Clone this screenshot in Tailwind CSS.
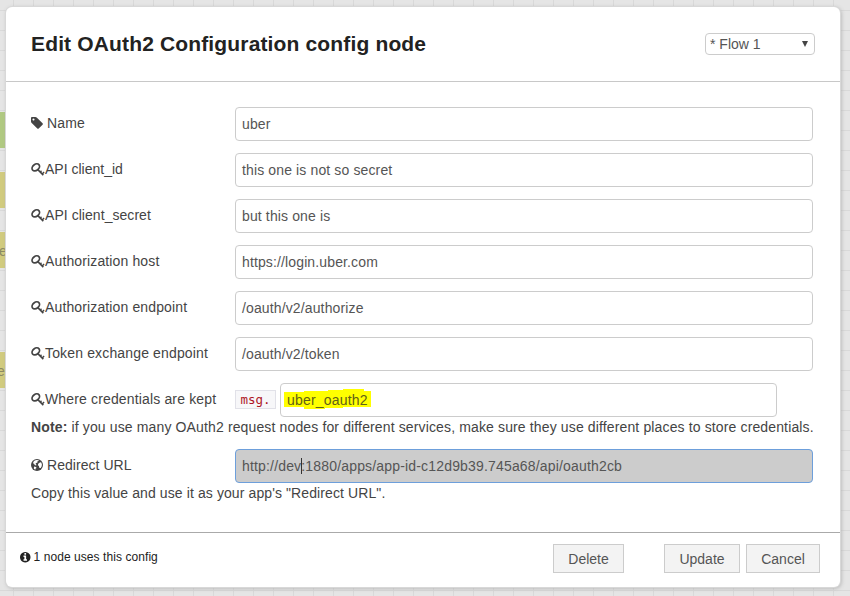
<!DOCTYPE html>
<html lang="en">
<head>
<meta charset="utf-8">
<title>Edit config node</title>
<script src="https://cdn.jsdelivr.net/npm/@tailwindcss/browser@4"></script>
</head>
<body class="w-[850px] h-[596px] overflow-hidden relative bg-[#e5e5e5] font-['Liberation_Sans',Arial,sans-serif] text-[14px] leading-5 text-[#444]">
<svg class="hidden">
  <symbol id="key" viewBox="0 0 14 14"><g fill="none" stroke="currentColor"><ellipse cx="4.8" cy="4.4" rx="4.1" ry="3" transform="rotate(-38 4.8 4.4)" stroke-width="1.7"/><path d="M6.6 6.4L12.3 12.1" stroke-width="1.6"/><path d="M9.3 9.1l1.2-1.3M11.2 11l1.9-1.9" stroke-width="1.4"/></g></symbol>
</svg>
<!-- workspace behind the dialog -->
<svg class="absolute inset-0" width="850" height="596" shape-rendering="crispEdges">
  <defs><pattern id="grid" width="20" height="20" patternUnits="userSpaceOnUse"><path d="M13 0h1v20h-1zM0 10h20v1H0z" fill="#d9d9d9"/></pattern></defs>
  <rect width="850" height="596" fill="url(#grid)"/>
  <path d="M0 112h5v36H0z" fill="#b0c981"/>
  <path d="M0 172h5v36H0zM0 232h5v36H0zM0 352h5v36H0z" fill="#d1cb7e"/>
</svg>
<span class="absolute left-[-1px] top-[241px] text-[#8b8963]">e</span>
<span class="absolute left-[-3px] top-[361px] text-[#8b8963]">e</span>

<main class="absolute left-[6px] top-[7px] w-[834px] h-[580px] rounded-[6px] bg-white shadow-[0_0_0_1px_#d8d8d8,1px_1px_4px_#aaa] flex flex-col">
  <header class="h-[75px] border-b border-[#c8c8c8] flex items-center justify-between pl-[25px] pr-[25px] shrink-0">
    <h1 class="text-[21px] font-bold text-[#222] tracking-[0.15px]">Edit OAuth2 Configuration config node</h1>
    <div class="w-[110px] h-[22px] border border-[#ccc] rounded-[4px] flex items-center justify-between pl-[4px] pr-[6px] text-[#555]"><span>* Flow 1</span><svg width="6" height="6" viewBox="0 0 6 6"><path d="M0 0h6L3 6z" fill="#444"/></svg></div>
  </header>
  <section class="flex-1 px-[25px] pt-[25px] flex flex-col tracking-[0.13px]">
    <div class="flex h-[34px] mb-3"><label class="w-[204px] pt-[6px] flex"><svg class="mt-[4px] mr-[4px]" width="12" height="12" viewBox="0 128 1536 1536"><path fill="currentColor" d="M448 448q0-53-37.5-90.5t-90.5-37.5-90.5 37.5-37.5 90.5 37.5 90.5 90.5 37.5 90.5-37.5 37.5-90.5zm1067 576q0 53-37 90l-491 492q-39 37-91 37-53 0-90-37l-715-716q-38-37-64.5-101t-26.5-117v-416q0-52 38-90t90-38h416q53 0 117 26.5t102 64.5l715 714q37 39 37 91z"/></svg><span>Name</span></label><div class="w-[578px] border border-[#ccc] rounded-[4px] px-[6px] pt-[6px] text-[#555]">uber</div></div>
    <div class="flex h-[34px] mb-3"><label class="w-[204px] pt-[6px] flex"><svg class="mt-[4px]" width="14" height="14"><use href="#key"/></svg><span class="tracking-normal">API client_id</span></label><div class="w-[578px] border border-[#ccc] rounded-[4px] px-[6px] pt-[6px] text-[#555]">this one is not so secret</div></div>
    <div class="flex h-[34px] mb-3"><label class="w-[204px] pt-[6px] flex"><svg class="mt-[4px]" width="14" height="14"><use href="#key"/></svg><span class="tracking-[0.05px]">API client_secret</span></label><div class="w-[578px] border border-[#ccc] rounded-[4px] px-[6px] pt-[6px] text-[#555]">but this one is</div></div>
    <div class="flex h-[34px] mb-3"><label class="w-[204px] pt-[6px] flex"><svg class="mt-[4px]" width="14" height="14"><use href="#key"/></svg><span>Authorization host</span></label><div class="w-[578px] border border-[#ccc] rounded-[4px] px-[6px] pt-[6px] text-[#555]">https://login.uber.com</div></div>
    <div class="flex h-[34px] mb-3"><label class="w-[204px] pt-[6px] flex"><svg class="mt-[4px]" width="14" height="14"><use href="#key"/></svg><span>Authorization endpoint</span></label><div class="w-[578px] border border-[#ccc] rounded-[4px] px-[6px] pt-[6px] text-[#555]">/oauth/v2/authorize</div></div>
    <div class="flex h-[34px] mb-3"><label class="w-[204px] pt-[6px] flex"><svg class="mt-[4px]" width="14" height="14"><use href="#key"/></svg><span class="tracking-[0.15px]">Token exchange endpoint</span></label><div class="w-[578px] border border-[#ccc] rounded-[4px] px-[6px] pt-[6px] text-[#555]">/oauth/v2/token</div></div>
    <div class="flex h-[34px]"><label class="w-[204px] pt-[6px] flex"><svg class="mt-[4px]" width="14" height="14"><use href="#key"/></svg><span class="tracking-[0.15px]">Where credentials are kept</span></label>
      <code class="mt-[7px] w-[41px] h-[19px] border border-[#e1e1e8] bg-[#f7f7f9] text-[#ad1625] text-[12.5px] leading-[17px] text-center font-['DejaVu_Sans_Mono',monospace] tracking-normal">msg.</code>
      <div class="relative ml-[4px] w-[497px] border border-[#ccc] rounded-[4px] px-[6px] pt-[6px] text-[#5f6018] tracking-[0.2px]"><svg class="absolute left-[3px] top-[5px]" width="88" height="21"><path d="M0 3h20V2h24V1h15V0h21v2h7v16H59v1H41v1H20v-2H0z" fill="#ff0"/></svg><span class="relative">uber_oauth2</span></div></div>
    <p class="whitespace-nowrap h-5 tracking-[0.135px]"><b>Note:</b> if you use many OAuth2 request nodes for different services, make sure they use different places to store credentials.</p>
    <div class="flex h-[34px] mt-3"><label class="w-[204px] pt-[6px] flex"><svg class="mt-[4px] mr-[4px]" width="12" height="12" viewBox="0 0 12 12"><circle cx="6" cy="6" r="6" fill="currentColor"/><path fill="#fff" d="M5.6 1L8 1.2 7 2.2l-.8.3.4.9-1.5.6-.6 1 .9.6-.3.8-1.4-.5-.6-1.1-.9-.2.1-1.6 1.4-1.5zM8.8 3.6l1.3-.3.8 2-.2 2-1 1.7-1.3-.1-.5-1.9-1-.7.3-1.6zM3 7.4l2 .6.5 1.1-1 .7-.2 1-1.4-1z"/></svg><span class="tracking-[0.04px]">Redirect URL</span></label><div class="relative w-[578px] border border-[#6d9fdb] rounded-[4px] bg-[#ccc] px-[6px] pt-[6px] text-[#555] tracking-[0.17px]">http://dev:1880/apps/app-id-c12d9b39.745a68/api/oauth2cb<i class="absolute left-[65px] top-[8px] w-px h-[16px] bg-[#333]"></i></div></div>
    <p class="h-5 tracking-[0.1px]">Copy this value and use it as your app's "Redirect URL".</p>
  </section>
  <footer class="h-[55px] border-t border-[#aaa] flex pl-[14px] pr-[20px] shrink-0">
    <div class="flex pt-[14px] text-[12px] text-[#222] tracking-[0.07px]"><svg class="mt-[5px] mr-[3px]" width="10.5" height="10.5" viewBox="128 128 1536 1536"><path fill="currentColor" d="M1152 1376v-160q0-14-9-23t-23-9h-96v-512q0-14-9-23t-23-9h-320q-14 0-23 9t-9 23v160q0 14 9 23t23 9h96v320h-96q-14 0-23 9t-9 23v160q0 14 9 23t23 9h448q14 0 23-9t9-23zm-128-896v-160q0-14-9-23t-23-9h-192q-14 0-23 9t-9 23v160q0 14 9 23t23 9h192q14 0 23-9t9-23zm640 416q0 209-103 385.5t-279.5 279.5-385.5 103-385.5-103-279.5-279.5-103-385.5 103-385.5 279.5-279.5 385.5-103 385.5 103 279.5 279.5 103 385.5z"/></svg><span>1 node uses this config</span></div>
    <div class="ml-auto mt-[11px] flex text-[#555]">
      <button class="w-[71px] h-[29px] border border-[#ccc] bg-[#f3f3f3] mr-[40px]">Delete</button>
      <button class="w-[76px] h-[29px] border border-[#ccc] bg-[#f3f3f3] mr-[6px]">Update</button>
      <button class="w-[74px] h-[29px] border border-[#ccc] bg-[#f3f3f3]">Cancel</button>
    </div>
  </footer>
</main>
</body>
</html>
